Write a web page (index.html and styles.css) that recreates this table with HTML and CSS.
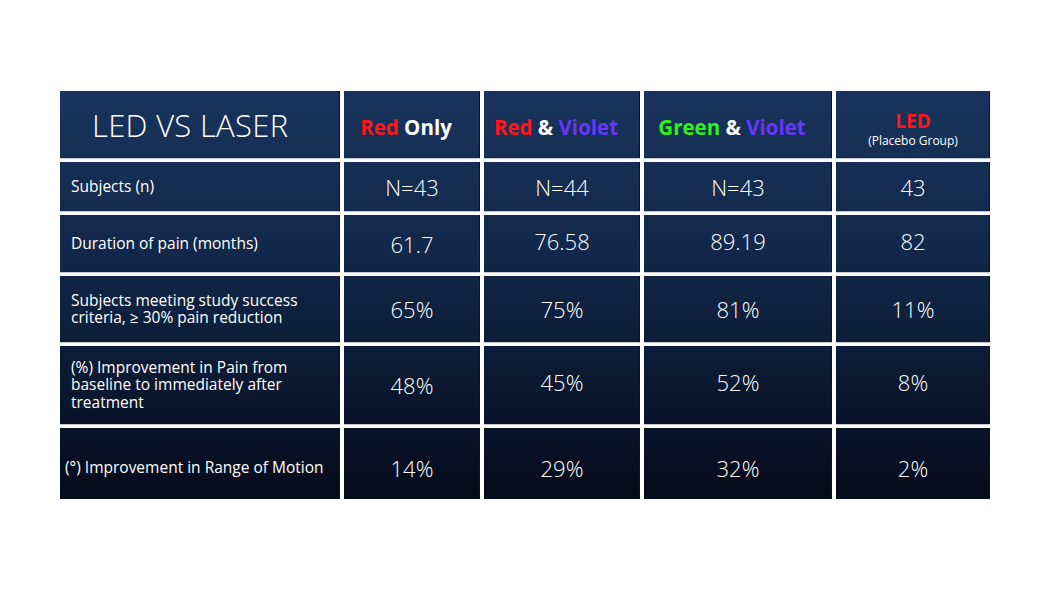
FILE: index.html
```html
<!DOCTYPE html>
<html lang="en">
<head>
<meta charset="utf-8">
<title>LED vs Laser</title>
<link rel="stylesheet" href="styles.css">
</head>
<body>
<div class="table">
  <div class="cell head title">LED VS LASER</div>
  <div class="cell head"><span class="c-red">Red</span>&nbsp;<span class="c-white">Only</span></div>
  <div class="cell head"><span class="c-red">Red</span>&nbsp;<span class="c-white">&amp;</span>&nbsp;<span class="c-violet">Violet</span></div>
  <div class="cell head"><span class="c-green">Green</span>&nbsp;<span class="c-white">&amp;</span>&nbsp;<span class="c-violet">Violet</span></div>
  <div class="cell head stack"><span class="c-red led">LED</span><span class="sub">(Placebo Group)</span></div>

  <div class="cell label">Subjects (n)</div>
  <div class="cell val">N=43</div>
  <div class="cell val">N=44</div>
  <div class="cell val">N=43</div>
  <div class="cell val">43</div>

  <div class="cell label">Duration of pain (months)</div>
  <div class="cell val">61.7</div>
  <div class="cell val up">76.58</div>
  <div class="cell val up">89.19</div>
  <div class="cell val up">82</div>

  <div class="cell label">Subjects meeting study success criteria, ≥ 30% pain reduction</div>
  <div class="cell val">65%</div>
  <div class="cell val">75%</div>
  <div class="cell val">81%</div>
  <div class="cell val">11%</div>

  <div class="cell label">(%) Improvement in Pain from baseline to immediately after treatment</div>
  <div class="cell val">48%</div>
  <div class="cell val up">45%</div>
  <div class="cell val up">52%</div>
  <div class="cell val up">8%</div>

  <div class="cell label tight">(°) Improvement in Range of Motion</div>
  <div class="cell val low">14%</div>
  <div class="cell val low">29%</div>
  <div class="cell val low">32%</div>
  <div class="cell val low">2%</div>
</div>
</body>
</html>
```

FILE: styles.css
```css
html, body {
  margin: 0;
  padding: 0;
  background: #ffffff;
}

body {
  font-family: "Open Sans", "DejaVu Sans", sans-serif;
  color: #ffffff;
  padding: 91px 0 0 60px;
}

.table {
  display: grid;
  grid-template-columns: 280px 136px 156px 188px 154px;
  grid-template-rows: 67px 49px 57px 66px 78px 71px;
  gap: 4px;
  width: 930px;
}

.cell {
  display: flex;
  align-items: center;
  background: linear-gradient(to bottom, #18345c 91px, #12284a 250px, #050b1a 499px) fixed;
  box-shadow: 0 1px 0 #c4c7d1, -1px 0 0 #0a1428 inset;
}

.head {
  justify-content: center;
  font-weight: 700;
  font-size: 20.5px;
  padding: 5px 12px 0 0;
  white-space: nowrap;
}

.title {
  justify-content: flex-start;
  padding: 0 0 0 32px;
  font-weight: 300;
  font-size: 31px;
  letter-spacing: 0.3px;
}

.stack {
  flex-direction: column;
  justify-content: center;
  padding: 8px 0 0 0;
}

.led {
  font-size: 19px;
  line-height: 22px;
}

.sub {
  font-size: 12px;
  font-weight: 400;
  line-height: 15px;
  margin-top: 1px;
}

.c-red { color: #ff1616; }
.c-white { color: #ffffff; }
.c-violet { color: #6b35ff; }
.c-green { color: #2ff21c; }

.label {
  padding: 0 8px 0 11px;
  font-size: 15.5px;
  line-height: 17.5px;
  font-weight: 400;
}

.label.tight {
  padding-left: 5px;
  padding-top: 8px;
}

.val {
  justify-content: center;
  font-size: 22px;
  font-weight: 300;
}

.val.up {
  padding-bottom: 6px;
}

.val.low {
  padding-top: 8px;
}
```
